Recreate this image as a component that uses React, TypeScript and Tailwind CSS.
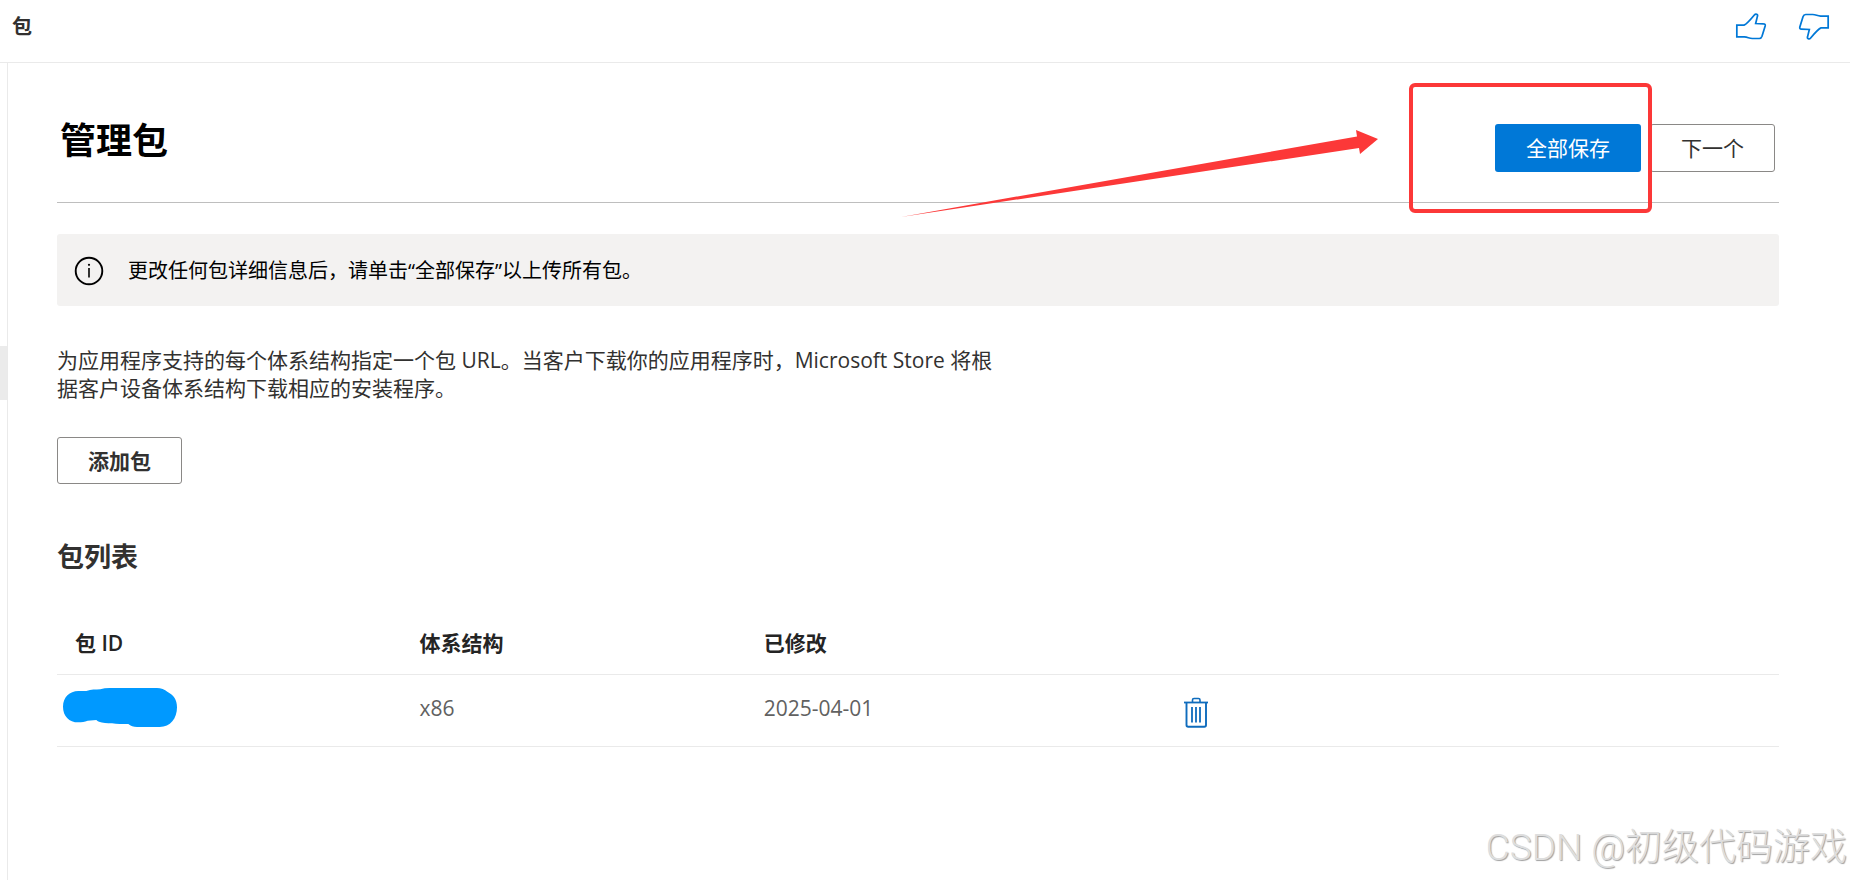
const packages = [{ arch: 'x86', modified: '2025-04-01' }];

function ThumbUp({ className }: { className?: string }) {
  return (
    <svg className={className} viewBox="0 0 96 87" fill="none" stroke="#0078d7" strokeWidth="5.200" strokeLinejoin="miter" aria-hidden="true">
      <path d="M5.500 39.500H27C34 37 49 20 58 9C62 4 70 6 67 14L62 34.500L86 35.500C90 35.500 91.500 38 90.500 42L81 73C79 79 77 79.500 73 79.500H52C42 79.500 40 76 28 74.500H5.500Z" />
    </svg>
  );
}

function InfoIcon() {
  return (
    <svg className="size-[30px] shrink-0" viewBox="0 0 30 30" fill="none" aria-hidden="true">
      <circle cx="15" cy="15" r="13.300" stroke="#000" strokeWidth="1.900" />
      <path d="M15 12V21.500" stroke="#000" strokeWidth="1.600" />
      <circle cx="15" cy="8.800" r="1.100" fill="#000" />
    </svg>
  );
}

function TrashIcon() {
  return (
    <svg className="h-[31px] w-6" viewBox="0 0 24 31" fill="none" stroke="#0f6cbd" aria-hidden="true">
      <path d="M0 5.500H24" strokeWidth="1.800" />
      <path d="M8.500 5V3Q8.500 1.500 10 1.500H14.500Q16 1.500 16 3V5" strokeWidth="1.600" />
      <path d="M2.500 6V28Q2.500 29.700 4.200 29.700H20.300Q22 29.700 22 28V6" strokeWidth="1.900" />
      <path d="M8 10V25.500M12 10V25.500M16 10V25.500" strokeWidth="1.800" />
    </svg>
  );
}

function Scribble() {
  return (
    <svg className="h-[39px] w-[115px]" viewBox="0 0 345 117" fill="#0099ff" role="img" aria-label="包 ID">
      <path d="M46 9H70C85 4 98 5 112 4Q124 0 140 0H282Q300 0 314 12C331 21 342 34 342 58C342 92 322 117 290 117H222Q206 117 196 108C160 108 130 107 108 101Q103 99 100 96L74 98C65 101 56 103 46 103C18 103 0 84 0 56S20 9 46 9Z" />
    </svg>
  );
}

export default function App() {
  return (
    <div className="relative flex min-h-screen flex-col overflow-hidden bg-white font-['Open_Sans','Noto_Sans_CJK_SC',sans-serif] text-[21px] leading-7 text-[#323130]">
      <header className="flex h-[63px] items-center justify-between border-b border-[#eaeaea] pr-5 pb-2 pl-3">
        <span className="text-xl font-semibold">包</span>
        <div className="flex gap-[31px] pb-px">
          <button type="button" aria-label="赞">
            <ThumbUp className="h-[29px] w-8" />
          </button>
          <button type="button" aria-label="踩">
            <ThumbUp className="h-[29px] w-8 rotate-180" />
          </button>
        </div>
      </header>

      <div className="flex flex-1">
        <aside className="w-2 shrink-0 border-r border-[#eaeaea] pt-[283px]">
          <div className="h-[54px] bg-[#ebebeb]" />
        </aside>

        <main className="min-w-0 flex-1 pr-[71px] pl-[49px]">
          <div className="relative flex h-[140px] items-start justify-between border-b border-[#bebebe] pr-1 pl-[3px]">
            <h1 className="pt-[54px] text-4xl leading-12 font-bold text-black">管理包</h1>
            <div className="flex gap-[9px] pt-[61px]">
              <button type="button" className="h-12 rounded-[3px] bg-[#0078d7] px-[31px] text-white">
                全部保存
              </button>
              <button type="button" className="h-12 rounded-[3px] border border-[#8a8886] bg-white px-[30px]">
                下一个
              </button>
            </div>
            <svg className="pointer-events-none absolute top-[66px] right-[400px] h-[90px] w-[480px]" viewBox="0 0 480 90" fill="#fc3838" aria-hidden="true">
              <path d="M2 88L458 7.500L457 1L479 10L461 25L460 19Z" />
            </svg>
            <div className="pointer-events-none absolute top-5 right-[127px] h-[130px] w-[243px] rounded-md border-4 border-[#fc3838]" />
          </div>

          <div className="mt-[31px] flex h-[72px] items-center gap-6 rounded-[3px] bg-[#f3f2f1] pt-[2px] pl-[17px] text-black">
            <InfoIcon />
            <p className="text-xl">更改任何包详细信息后，请单击“全部保存”以上传所有包。</p>
          </div>

          <p className="mt-10 max-w-[940px]">
            为应用程序支持的每个体系结构指定一个包 URL。当客户下载你的应用程序时，Microsoft Store 将根据客户设备体系结构下载相应的安装程序。
          </p>

          <button type="button" className="mt-[35px] h-[47px] rounded-[3px] border border-[#8a8886] bg-white px-[30px] font-semibold">
            添加包
          </button>

          <h2 className="mt-[55px] text-[27px] leading-9 font-semibold">包列表</h2>

          <table className="mt-[37px] w-full table-fixed border-collapse text-left">
            <thead>
              <tr className="h-[62px] border-b border-[#eaeaea] text-[#242424]">
                <th className="pl-[18px] font-semibold">包 ID</th>
                <th className="pl-[18px] font-semibold">体系结构</th>
                <th className="pl-[18px] font-semibold">已修改</th>
                <td />
                <td />
              </tr>
            </thead>
            <tbody>
              {packages.map((item) => (
                <tr key={item.arch} className="h-[72px] border-b border-[#eaeaea] text-[#616161]">
                  <td className="pb-[6px] pl-[6px]">
                    <Scribble />
                  </td>
                  <td className="pb-1 pl-[18px]">{item.arch}</td>
                  <td className="pb-1 pl-[18px]">{item.modified}</td>
                  <td className="pt-1 pl-[94px]">
                    <button type="button" aria-label="删除" className="block">
                      <TrashIcon />
                    </button>
                  </td>
                  <td />
                </tr>
              ))}
            </tbody>
          </table>
        </main>
      </div>

      <div className="pointer-events-none absolute right-[3px] bottom-2 font-['Roboto','Noto_Sans_CJK_SC',sans-serif] text-[37px] leading-12 font-light text-[#dedede] [text-shadow:1px_1px_1px_#a0a0a0]">
        CSDN @初级代码游戏
      </div>
    </div>
  );
}
